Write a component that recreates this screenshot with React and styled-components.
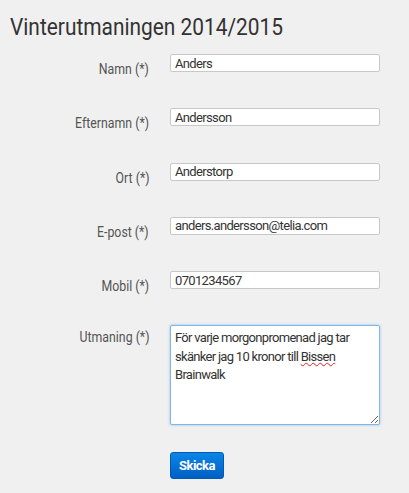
import styled, { createGlobalStyle } from 'styled-components'

const GlobalStyle = createGlobalStyle`
  html, body {
    margin: 0;
    background: #f0f0f0;
  }
  body {
    font-family: Roboto, "Liberation Sans", sans-serif;
    color: #333;
  }
`

const fields = [
  { label: 'Namn', value: 'Anders' },
  { label: 'Efternamn', value: 'Andersson' },
  { label: 'Ort', value: 'Anderstorp' },
  { label: 'E-post', value: 'anders.andersson@telia.com' },
  { label: 'Mobil', value: '0701234567' },
]

const App = () => {
  return (
    <Page>
      <GlobalStyle />
      <Title>
        <Narrow>Vinterutmaningen 2014/2015</Narrow>
      </Title>
      <Form onSubmit={(e) => e.preventDefault()}>
        {fields.map((f) => (
          <Row key={f.label}>
            <Label>
              <NarrowRight>{f.label} (*)</NarrowRight>
            </Label>
            <Input defaultValue={f.value} spellCheck={false} />
          </Row>
        ))}
        <Row $tall>
          <Label $tall>
            <NarrowRight>Utmaning (*)</NarrowRight>
          </Label>
          <TextArea contentEditable suppressContentEditableWarning role='textbox'>
            För varje morgonpromenad jag tar skänker jag 10 kronor till <Misspelled>Bissen</Misspelled> Brainwalk
          </TextArea>
        </Row>
        <Actions>
          <Button type='submit'>Skicka</Button>
        </Actions>
      </Form>
    </Page>
  )
}

export default App

const Page = styled.div`
  width: 409px;
  min-height: 493px;
  box-sizing: border-box;
  padding: 12px 0 0 10px;
`

const Title = styled.h1`
  margin: 0;
  font-size: 24px;
  font-weight: 400;
  line-height: 30px;
  color: #333;
  white-space: nowrap;
`

// the reference uses a condensed face; squeeze Roboto to its width
const Narrow = styled.span`
  display: inline-block;
  transform: scaleX(0.87);
  transform-origin: left center;
`

const NarrowRight = styled.span`
  display: inline-block;
  white-space: nowrap;
  transform: scaleX(0.88);
  transform-origin: right center;
`

const Form = styled.form`
  margin-top: 12px;
  display: flex;
  flex-direction: column;
`

const Row = styled.div`
  display: grid;
  grid-template-columns: 139px 210px;
  column-gap: 21px;
  align-items: start;
  height: ${(p) => (p.$tall ? '127px' : '54.3px')};
`

const Label = styled.label`
  text-align: right;
  font-size: 14px;
  line-height: 18px;
  color: #555;
  padding-top: ${(p) => (p.$tall ? '3px' : '6px')};
`

const Input = styled.input`
  box-sizing: border-box;
  width: 210px;
  height: 18px;
  margin: 0;
  padding: 0 4px;
  border: 1px solid #c8c8c8;
  border-radius: 2px;
  background: #fff;
  font-family: Roboto, "Liberation Sans", sans-serif;
  font-size: 13px;
  letter-spacing: -0.65px;
  color: #333;
  outline: none;
`

const TextArea = styled.div`
  box-sizing: border-box;
  width: 210px;
  height: 100px;
  padding: 3px 4px;
  border: 1px solid #7fb6e6;
  border-radius: 2px;
  box-shadow: 0 0 3px rgba(82, 168, 236, 0.6);
  background: #fff;
  font-size: 13px;
  line-height: 18.5px;
  letter-spacing: -0.7px;
  color: #333;
  outline: none;
  resize: both;
  overflow: auto;
`

const Misspelled = styled.span`
  text-decoration: underline wavy #e02020;
  text-decoration-thickness: 1px;
  text-underline-offset: 1px;
`

const Actions = styled.div`
  padding-left: 160px;
`

const Button = styled.button`
  width: 54px;
  height: 27px;
  padding: 0;
  border: 1px solid #0059b3;
  border-radius: 3px;
  background: linear-gradient(#0a86e6, #005fc4);
  color: #fff;
  font-family: Roboto, "Liberation Sans", sans-serif;
  font-weight: 700;
  font-size: 13px;
  letter-spacing: -0.5px;
  cursor: pointer;
`
